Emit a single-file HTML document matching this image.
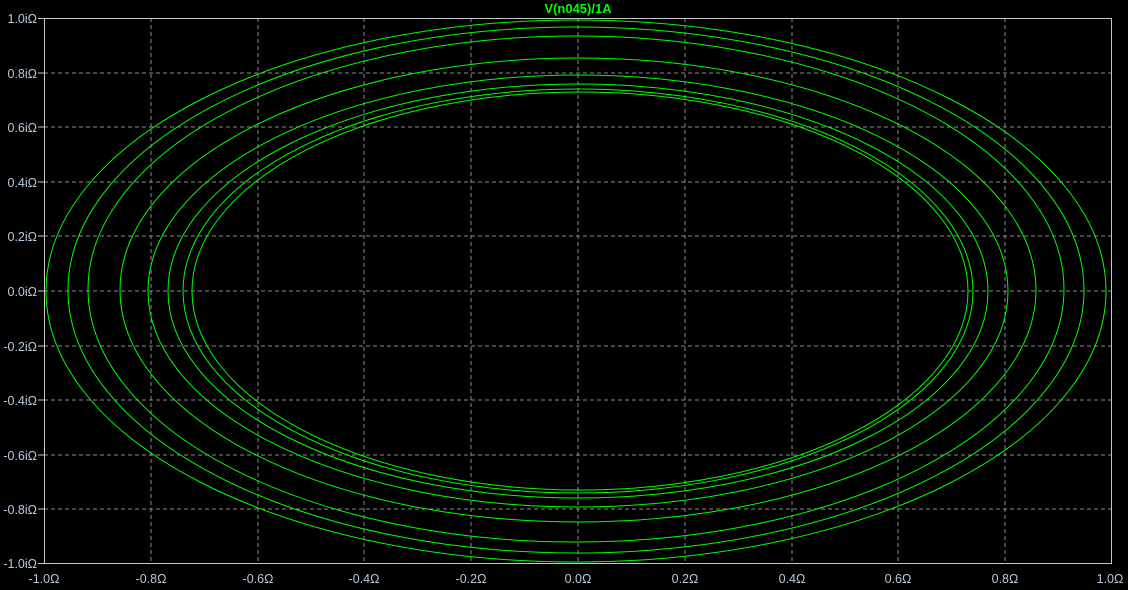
<!DOCTYPE html>
<html><head><meta charset="utf-8"><style>
html,body{margin:0;padding:0;background:#000;width:1128px;height:590px;overflow:hidden}
svg text{font-family:"Liberation Sans",Arial,sans-serif;font-size:12.5px;fill:#b8c8dc}
</style></head><body>
<svg width="1128" height="590" xmlns="http://www.w3.org/2000/svg">
<rect width="1128" height="590" fill="#000"/>
<g stroke="#8a8a8a" stroke-width="1" stroke-dasharray="4,3" fill="none">
<line x1="151" y1="18" x2="151" y2="564"/><line x1="258" y1="18" x2="258" y2="564"/>
<line x1="364" y1="18" x2="364" y2="564"/><line x1="471" y1="18" x2="471" y2="564"/>
<line x1="578" y1="18" x2="578" y2="564"/><line x1="685" y1="18" x2="685" y2="564"/>
<line x1="792" y1="18" x2="792" y2="564"/><line x1="898" y1="18" x2="898" y2="564"/>
<line x1="1005" y1="18" x2="1005" y2="564"/>
<line x1="44" y1="73" x2="1112" y2="73"/><line x1="44" y1="127" x2="1112" y2="127"/>
<line x1="44" y1="182" x2="1112" y2="182"/><line x1="44" y1="236" x2="1112" y2="236"/>
<line x1="44" y1="291" x2="1112" y2="291"/><line x1="44" y1="346" x2="1112" y2="346"/>
<line x1="44" y1="400" x2="1112" y2="400"/><line x1="44" y1="455" x2="1112" y2="455"/>
<line x1="44" y1="509" x2="1112" y2="509"/>
</g>
<g fill="none" stroke="#00ff00" stroke-width="1">
<ellipse cx="576" cy="291" rx="530" ry="271"/>
<ellipse cx="576" cy="290" rx="508" ry="263"/>
<ellipse cx="576" cy="289" rx="488" ry="253"/>
<ellipse cx="578" cy="290" rx="458" ry="232"/>
<ellipse cx="578" cy="291" rx="430" ry="216"/>
<ellipse cx="578" cy="291" rx="410" ry="207"/>
<ellipse cx="578" cy="291" rx="395" ry="202"/>
<ellipse cx="580" cy="291" rx="388" ry="199"/>
</g>
<rect x="44.5" y="18.5" width="1067" height="545" fill="none" stroke="#c8c8c8" stroke-width="1"/>
<g stroke="#c8c8c8">
<line x1="38" y1="18.5" x2="44" y2="18.5"/><line x1="38" y1="73" x2="44" y2="73"/>
<line x1="38" y1="127" x2="44" y2="127"/><line x1="38" y1="182" x2="44" y2="182"/>
<line x1="38" y1="236" x2="44" y2="236"/><line x1="38" y1="291" x2="44" y2="291"/>
<line x1="38" y1="346" x2="44" y2="346"/><line x1="38" y1="400" x2="44" y2="400"/>
<line x1="38" y1="455" x2="44" y2="455"/><line x1="38" y1="509" x2="44" y2="509"/>
<line x1="38" y1="563.5" x2="44" y2="563.5"/>
</g>
<g text-anchor="end">
<text x="37" y="23">1.0iΩ</text><text x="37" y="78">0.8iΩ</text>
<text x="37" y="132">0.6iΩ</text><text x="37" y="187">0.4iΩ</text>
<text x="37" y="241">0.2iΩ</text><text x="37" y="296">0.0iΩ</text>
<text x="37" y="351">-0.2iΩ</text><text x="37" y="405">-0.4iΩ</text>
<text x="37" y="460">-0.6iΩ</text><text x="37" y="514">-0.8iΩ</text>
<text x="37" y="568">-1.0iΩ</text>
</g>
<g text-anchor="middle">
<text x="44" y="583">-1.0Ω</text><text x="151" y="583">-0.8Ω</text>
<text x="258" y="583">-0.6Ω</text><text x="364" y="583">-0.4Ω</text>
<text x="471" y="583">-0.2Ω</text><text x="578" y="583">0.0Ω</text>
<text x="685" y="583">0.2Ω</text><text x="792" y="583">0.4Ω</text>
<text x="898" y="583">0.6Ω</text><text x="1005" y="583">0.8Ω</text>
<text x="1110" y="583">1.0Ω</text>
<text x="578" y="13" style="fill:#00ff00;font-weight:bold;font-size:13px">V(n045)/1A</text>
</g>
</svg>
</body></html>
